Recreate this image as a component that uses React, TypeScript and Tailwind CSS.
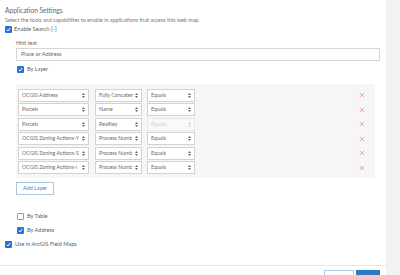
import { ReactElement } from 'react';

const rows = [
  { layer: 'OCGIS Address', field: 'Fully Concaten', op: 'Equals', disabled: false },
  { layer: 'Parcels', field: 'Name', op: 'Equals', disabled: false },
  { layer: 'Parcels', field: 'RealKey', op: 'Equals', disabled: true },
  { layer: 'OCGIS Zoning Actions-Y', field: 'Process Numb', op: 'Equals', disabled: false },
  { layer: 'OCGIS Zoning Actions-S', field: 'Process Numb', op: 'Equals', disabled: false },
  { layer: 'OCGIS Zoning Actions-I', field: 'Process Numb', op: 'Equals', disabled: false },
];

const Check = ({ checked }: { checked: boolean }): ReactElement =>
  checked ? (
    <span className="flex items-center justify-center w-[7px] h-[7px] rounded-[1px] bg-[#2b72d6] shrink-0">
      <svg width="5" height="5" viewBox="0 0 10 10">
        <path d="M1.5 5.5 L4 8 L8.5 2" stroke="white" strokeWidth="2" fill="none" />
      </svg>
    </span>
  ) : (
    <span className="w-[7px] h-[7px] rounded-[1px] border border-[#999] bg-white shrink-0" />
  );

const Arrows = ({ faded }: { faded?: boolean }): ReactElement => (
  <svg width="3" height="5" viewBox="0 0 6 10" className="shrink-0">
    <path d="M0 4 L3 0 L6 4 Z M0 6 L3 10 L6 6 Z" fill={faded ? '#d4d4d4' : '#666'} />
  </svg>
);

const Select = ({ text, width, disabled }: { text: string; width: string; disabled?: boolean }): ReactElement => (
  <div
    className={`${width} h-[13px] flex items-center justify-between pl-[3px] pr-[3px] border ${
      disabled ? 'border-[#e8e8e8] bg-[#f9f9f9] text-[#cfcfcf]' : 'border-[#d2d2d2] bg-white text-[#6a6a6a]'
    }`}
  >
    <span className="overflow-hidden whitespace-nowrap text-[5.3px] leading-none">{text}</span>
    <Arrows faded={disabled} />
  </div>
);

export default function App(): ReactElement {
  return (
    <div className="w-[400px] h-[275px] overflow-hidden flex bg-white font-['Lato',sans-serif] text-[#606060]">
      <div className="w-[386px] flex flex-col pt-[5px]">
        <div className="h-[10px] pl-[5px] text-[6.6px] leading-[10px] text-[#666]">Application Settings</div>
        <div className="h-[10px] pl-[5px] text-[5.4px] leading-[10px] text-[#777]">
          Select the tools and capabilities to enable in applications that access this web map.
        </div>
        <div className="h-[9px] pl-[5px] flex items-center gap-[2px]">
          <Check checked />
          <span className="text-[5.8px]">Enable Search [-]</span>
        </div>

        <div className="pl-[16px] pr-[6px] flex flex-col">
          <div className="mt-[5px] h-[8px] text-[5.4px] leading-[8px] text-[#666]">Hint text</div>
          <div className="mt-[1px] h-[13px] border border-[#d6d6d6] flex items-center px-[4px] text-[5.6px] text-[#666]">
            Place or Address
          </div>
          <div className="mt-[5px] h-[7px] pl-[1px] flex items-center gap-[3px]">
            <Check checked />
            <span className="text-[5.6px]">By Layer</span>
          </div>

          <div className="mt-[11px] w-[359px] h-[94px] bg-[#f6f6f6] pt-[5px] pl-[2px] flex flex-col gap-[1.5px]">
            {rows.map((r, i) => (
              <div key={i} className="flex items-center">
                <Select text={r.layer} width="w-[71px]" />
                <div className="w-[6px]" />
                <Select text={r.field} width="w-[47px]" />
                <div className="w-[5px]" />
                <Select text={r.op} width="w-[48px]" disabled={r.disabled} />
                <div className="flex-1 flex justify-end pr-[10px]">
                  <svg width="6" height="6" viewBox="0 0 10 10">
                    <path d="M1.5 1.5 L8.5 8.5 M8.5 1.5 L1.5 8.5" stroke="#ef9090" strokeWidth="1.3" />
                  </svg>
                </div>
              </div>
            ))}
          </div>

          <div className="mt-[4px] w-[38px] h-[13px] border border-[#a9c8e6] flex items-center justify-center text-[5.4px] text-[#3a7fbd]">
            Add Layer
          </div>

          <div className="mt-[18px] h-[7px] pl-[1px] flex items-center gap-[3px]">
            <Check checked={false} />
            <span className="text-[5.6px]">By Table</span>
          </div>
          <div className="mt-[7px] h-[7px] pl-[1px] flex items-center gap-[3px]">
            <Check checked />
            <span className="text-[5.6px]">By Address</span>
          </div>
        </div>

        <div className="mt-[7px] h-[7px] pl-[5px] flex items-center gap-[3px]">
          <Check checked />
          <span className="text-[5.6px]">Use in ArcGIS Field Maps</span>
        </div>

        <div className="mt-[17px] border-t border-[#e8e8e8]" />
        <div className="mt-[4px] flex justify-end gap-[2px] pr-[6px]">
          <div className="w-[30px] h-[12px] border border-[#a9c8e6] bg-white flex justify-center text-[5.4px] text-[#3a7fbd] pt-[3px]">
            Cancel
          </div>
          <div className="w-[24px] h-[12px] bg-[#2a7ac0] flex justify-center text-[5.4px] text-white pt-[3px]">
            Save
          </div>
        </div>
      </div>
      <div className="w-[14px] bg-[#f2f2f2]" />
    </div>
  );
}
